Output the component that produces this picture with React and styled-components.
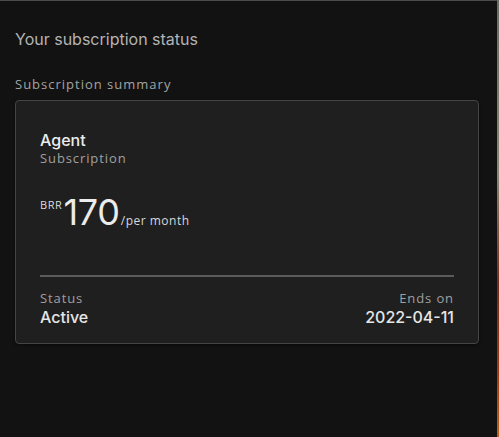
import React from 'react';
import styled, { createGlobalStyle } from 'styled-components';

const GlobalStyle = createGlobalStyle`
  html, body {
    margin: 0;
    padding: 0;
    background: #121212;
  }
  * {
    box-sizing: border-box;
  }
`

const Screen = styled.div`
  width: 499px;
  height: 437px;
  display: flex;
  overflow: hidden;
`
const Panel = styled.div`
  flex: 1;
  background-color: #121212;
  border-top: 1px solid #4b4b4b;
  padding: 0 18px 0 15px;
  font-family: Inter, "Liberation Sans", sans-serif;
`
const Backdrop = styled.div`
  width: 2px;
  background: linear-gradient(180deg, #6c6c60 0%, #8a8670 40%, #7a2a1a 65%, #a23a10 85%, #c0601a 100%);
`
const PageTitle = styled.h1`
  margin: 28px 0 0;
  font-size: 16px;
  font-weight: 400;
  color: #b4b4b4;
  line-height: 20px;
`
const SectionLabel = styled.h2`
  margin: 26px 0 0;
  font-family: "Open Sans", sans-serif;
  font-size: 13px;
  font-weight: 500;
  letter-spacing: 1px;
  color: #a3a3a3;
  line-height: 18px;
`
const Card = styled.div`
  margin-top: 7px;
  background-color: #1f1f1f;
  border: 1px solid #454545;
  border-radius: 4px;
  padding: 29px 24px 16px 24px;
  box-shadow: 0 1px 3px rgba(0, 0, 0, 0.5);
`
const PlanName = styled.div`
  font-size: 16px;
  font-weight: 500;
  color: #ececec;
  line-height: 20px;
`
const Caption = styled.div`
  font-family: "Open Sans", sans-serif;
  font-size: 13px;
  letter-spacing: 0.9px;
  color: #a0a0a0;
  line-height: 17px;
  text-align: ${p => (p.$right ? 'right' : 'left')};
`
const PriceRow = styled.div`
  display: flex;
  align-items: baseline;
  margin-top: 24px;
  height: 84px;
`
const Currency = styled.span`
  font-family: "Open Sans", sans-serif;
  font-size: 11px;
  letter-spacing: 0.6px;
  color: #dcdcdc;
  align-self: flex-start;
  margin-top: 6px;
  margin-right: 1px;
`
const Amount = styled.span`
  font-size: 36px;
  font-weight: 400;
  color: #ececec;
  line-height: 42px;
  letter-spacing: -0.3px;
`
const Period = styled.span`
  font-family: "Open Sans", sans-serif;
  font-size: 12px;
  letter-spacing: 0.5px;
  color: #d8d8d8;
  margin-left: 1px;
`
const Divider = styled.hr`
  margin: 0;
  border: none;
  height: 2px;
  background-color: #5b5b5b;
`
const InfoRow = styled.div`
  display: flex;
  justify-content: space-between;
  margin-top: 13px;
`
const Value = styled.div`
  font-size: 16px;
  font-weight: 500;
  color: #e6e6e6;
  line-height: 20px;
  text-align: ${p => (p.$right ? 'right' : 'left')};
`

function App() {
  return (
    <Screen>
      <GlobalStyle />
      <Panel>
        <PageTitle>Your subscription status</PageTitle>
        <SectionLabel>Subscription summary</SectionLabel>
        <Card>
          <PlanName>Agent</PlanName>
          <Caption>Subscription</Caption>
          <PriceRow>
            <Currency>BRR</Currency>
            <Amount>170</Amount>
            <Period>/per month</Period>
          </PriceRow>
          <Divider />
          <InfoRow>
            <div>
              <Caption>Status</Caption>
              <Value>Active</Value>
            </div>
            <div>
              <Caption $right>Ends on</Caption>
              <Value $right>2022-04-11</Value>
            </div>
          </InfoRow>
        </Card>
      </Panel>
      <Backdrop />
    </Screen>
  );
}

export default App;
